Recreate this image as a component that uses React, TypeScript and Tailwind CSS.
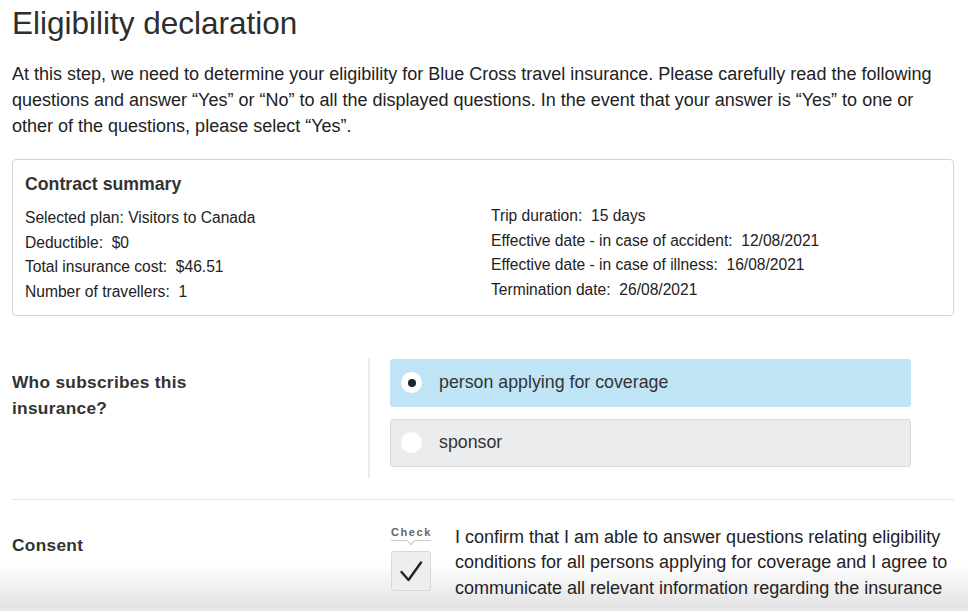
import React from "react";

const leftRows = [
  ["Selected plan:", "Visitors to Canada"],
  ["Deductible:", " $0"],
  ["Total insurance cost:", " $46.51"],
  ["Number of travellers:", " 1"],
];

const rightRows = [
  ["Trip duration:", " 15 days"],
  ["Effective date - in case of accident:", " 12/08/2021"],
  ["Effective date - in case of illness:", " 16/08/2021"],
  ["Termination date:", " 26/08/2021"],
];

function Radio({ checked }: { checked: boolean }) {
  return (
    <span className="flex h-[21px] w-[21px] shrink-0 items-center justify-center rounded-full bg-white">
      {checked && <span className="h-[8px] w-[8px] rounded-full bg-[#1b2533]" />}
    </span>
  );
}

export default function App() {
  return (
    <div
      className="relative h-[611px] overflow-hidden bg-[linear-gradient(to_bottom,#ffffff_0px,#ffffff_564px,#e4e4e4_606px,#e9e9e9_611px)] text-[#2a2a2a]"
      style={{ fontFamily: '"Liberation Sans", Arial, sans-serif' }}
    >
      <div className="pl-3 pr-[14px]">
        <h1 className="pt-[5px] text-[31.5px] leading-[36px] text-[#2e2e2e]">Eligibility declaration</h1>

        <p className="mt-[20px] text-[18px] leading-[26px] text-[#222]">
          At this step, we need to determine your eligibility for Blue Cross travel insurance. Please carefully read the following
          questions and answer “Yes” or “No” to all the displayed questions. In the event that your answer is “Yes” to one or
          other of the questions, please select “Yes”.
        </p>

        {/* Contract summary */}
        <div className="mt-[20px] rounded-[4px] border border-[#d4d4d4] px-3 pb-[10px] pt-3">
          <div className="text-[17.7px] font-bold leading-6 text-[#333]">Contract summary</div>
          <div className="mt-[10px] grid grid-cols-2 gap-x-4 text-[15.6px] leading-[24.7px] text-[#222]">
            <div>
              {leftRows.map(([k, v]) => (
                <div key={k} className="whitespace-pre">
                  {k} {v}
                </div>
              ))}
            </div>
            <div className="-mt-[2px]">
              {rightRows.map(([k, v]) => (
                <div key={k} className="whitespace-pre">
                  {k} {v}
                </div>
              ))}
            </div>
          </div>
        </div>

        {/* Who subscribes */}
        <div className="mt-[42px] flex">
          <div className="w-[356px] pt-[11px] text-[17.3px] font-bold leading-[26px] tracking-[0.3px] text-[#333]">
            Who subscribes this
            <br />
            insurance?
          </div>
          <div className="border-l-2 border-[#ebebeb] pb-[11px] pl-[20px]">
            <div className="flex w-[521px] flex-col gap-[12px] pt-[1px]">
              <div className="flex h-[48px] items-center gap-[17px] rounded-[3px] bg-[#bfe4f6] pl-[11px] text-[17.8px] text-[#333]">
                <Radio checked />
                person applying for coverage
              </div>
              <div className="flex h-[48px] items-center gap-[17px] rounded-[3px] border border-[#dadada] bg-[#ebecee] pl-[10px] text-[17.8px] text-[#333]">
                <Radio checked={false} />
                sponsor
              </div>
            </div>
          </div>
        </div>

        <div className="mt-[21px] h-px bg-[#e4e4e4]" />

        {/* Consent */}
        <div className="flex pt-[25px]">
          <div className="w-[379px] pt-[8px] text-[17.3px] font-bold leading-6 tracking-[0.3px] text-[#333]">Consent</div>
          <div className="flex flex-col items-center">
            <div className="relative w-[40px] border-b border-[#c8c8c8] pb-[1px] text-center text-[11px] font-bold leading-[14px] tracking-[1.6px] text-[#666]">
              Check
              <span className="absolute -bottom-[4px] left-1/2 h-[6px] w-[6px] -translate-x-1/2 rotate-45 border-b border-r border-[#c8c8c8] bg-white" />
            </div>
            <div className="mt-[10px] flex h-[40px] w-[40px] items-center justify-center rounded-[3px] border border-[#d8d8d8] bg-[#eeeeee]">
              <svg width="24" height="24" viewBox="0 0 24 24" fill="none">
                <path d="M2.5 13 L9.5 21 L22 3.5" stroke="#222" strokeWidth="2.4" strokeLinecap="round" strokeLinejoin="round" />
              </svg>
            </div>
          </div>
          <p className="ml-[24px] w-[496px] text-[18px] leading-[25.5px] text-[#222]">
            I confirm that I am able to answer questions relating eligibility conditions for all persons applying for coverage and I
            agree to communicate all relevant information regarding the insurance
          </p>
        </div>
      </div>
    </div>
  );
}
